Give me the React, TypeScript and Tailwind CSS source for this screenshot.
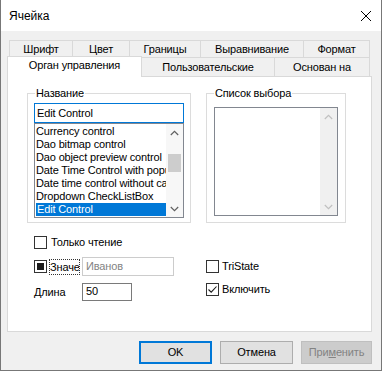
import React from "react";

const font = "font-['Liberation_Sans',Arial,sans-serif]";

function Box({ state }: { state: "off" | "on" | "mixed" }) {
  return (
    <span className="w-[13px] h-[13px] border border-[#333333] bg-white flex items-center justify-center shrink-0">
      {state === "mixed" && <span className="w-[7px] h-[7px] bg-[#1a1a1a]" />}
      {state === "on" && (
        <svg width="11" height="11" viewBox="0 0 11 11">
          <path d="M1.5 5.5 L4.2 8.2 L9.5 2.5" fill="none" stroke="#1a1a1a" strokeWidth="1.1" />
        </svg>
      )}
    </span>
  );
}

function Chevron({ up, color }: { up?: boolean; color: string }) {
  return (
    <svg width="9" height="6" viewBox="0 0 9 6">
      <path
        d={up ? "M0.8 5 L4.5 1.3 L8.2 5" : "M0.8 1 L4.5 4.7 L8.2 1"}
        fill="none"
        stroke={color}
        strokeWidth="1.2"
      />
    </svg>
  );
}

const items = [
  "Currency control",
  "Dao bitmap control",
  "Dao object preview control",
  "Date Time Control with popup calendar",
  "Date time control without calendar",
  "Dropdown CheckListBox",
  "Edit Control",
];

export default function App() {
  return (
    <div className={`w-[382px] h-[371px] flex flex-col border-x border-b border-[#777777] text-[11px] tracking-[-0.15px] text-black ${font}`}>
      {/* title bar */}
      <div className="h-[31px] bg-white flex items-center pl-[8px] pr-[10px] shrink-0">
        <span className="text-[12px] tracking-normal">Ячейка</span>
        <svg className="ml-auto" width="10" height="10" viewBox="0 0 10 10">
          <path d="M0 0 L10 10 M10 0 L0 10" stroke="#000" strokeWidth="1" />
        </svg>
      </div>

      <div className="flex-1 bg-[#f0f0f0] pl-[6px] pr-[9px] pt-[9px] flex flex-col">
        {/* back tab row */}
        <div className="flex h-[17px] ml-[2px]">
          <div className="w-[63px] border-l border-t border-[#d9d9d9] flex items-center justify-center">Шрифт</div>
          <div className="w-[57px] border-l border-t border-[#d9d9d9] flex items-center justify-center">Цвет</div>
          <div className="w-[71px] border-l border-t border-[#d9d9d9] flex items-center justify-center">Границы</div>
          <div className="w-[103px] border-l border-t border-[#d9d9d9] flex items-center justify-center">Выравнивание</div>
          <div className="w-[67px] border-x border-t border-[#d9d9d9] flex items-center justify-center">Формат</div>
        </div>
        {/* front tab row */}
        <div className="flex h-[19px] items-end">
          <div className="relative z-10 w-[135px] h-[21px] -mb-px bg-white border-x border-t border-[#d9d9d9] flex items-center justify-center pb-[3px]">
            Орган управления
          </div>
          <div className="w-[133px] h-[19px] border-r border-t border-[#d9d9d9] flex items-center justify-center">Пользовательские</div>
          <div className="w-[95px] h-[19px] border-r border-t border-[#d9d9d9] flex items-center justify-center">Основан на</div>
        </div>

        {/* tab panel */}
        <div className="w-full h-[256px] bg-white border border-[#d9d9d9] pl-[19px] pt-[16px] flex flex-col">
          <div className="flex gap-[15px]">
            {/* Название */}
            <div className="relative w-[164px] h-[130px] border border-[#dcdcdc] pl-[6px] pt-[9px]">
              <span className="absolute -top-[8px] left-[7px] px-[1px] bg-white leading-[14px]">Название</span>
              <div className="w-[150px] h-[20px] border border-[#0078d7] flex items-center pl-[2px]">Edit Control</div>
              <div className="w-[150px] h-[95px] border border-[#828790] flex">
                <div className="w-[131px] pt-[1px] flex flex-col">
                  {items.map((t, i) => (
                    <div
                      key={t}
                      className={`h-[13px] leading-[13px] pl-[1px] whitespace-nowrap overflow-hidden ${
                        i === items.length - 1 ? "bg-[#0078d7] text-white ml-px" : ""
                      }`}
                    >
                      {t}
                    </div>
                  ))}
                </div>
                <div className="w-[17px] flex flex-col bg-[#f7f7f7]">
                  <div className="h-[17px] flex items-center justify-center">
                    <Chevron up color="#606060" />
                  </div>
                  <div className="flex-1 flex flex-col items-center">
                    <div className="mt-[13px] w-[13px] h-[18px] bg-[#cdcdcd]" />
                  </div>
                  <div className="h-[17px] flex items-center justify-center">
                    <Chevron color="#606060" />
                  </div>
                </div>
              </div>
            </div>

            {/* Список выбора */}
            <div className="relative w-[140px] h-[130px] border border-[#dcdcdc] pl-[7px] pt-[13px]">
              <span className="absolute -top-[8px] left-[7px] px-[1px] bg-white leading-[14px]">Список выбора</span>
              <div className="w-[124px] h-[109px] border border-[#828790] flex justify-end">
                <div className="w-[17px] flex flex-col bg-[#f0f0f0]">
                  <div className="h-[17px] flex items-center justify-center">
                    <Chevron up color="#c0c0c0" />
                  </div>
                  <div className="flex-1" />
                  <div className="h-[17px] flex items-center justify-center">
                    <Chevron color="#c0c0c0" />
                  </div>
                </div>
              </div>
            </div>
          </div>

          {/* options */}
          <div className="mt-[13px] pl-[7px] flex">
            <div className="w-[172px] flex flex-col">
              <div className="h-[13px] flex items-center gap-[4px]">
                <Box state="off" />
                <span>Только чтение</span>
              </div>
              <div className="mt-[8px] h-[19px] flex items-center">
                <Box state="mixed" />
                <span className="ml-[2px] w-[31px] h-[16px] shrink-0 border border-dotted border-[#333] overflow-hidden whitespace-nowrap leading-[14px]">
                  Значение
                </span>
                <div className="ml-[2px] w-[92px] h-[19px] border border-[#cccccc] flex items-center pl-[3px] text-[#838383]">
                  Иванов
                </div>
              </div>
              <div className="mt-[6px] h-[19px] flex items-center">
                <span className="w-[48px] pt-[2px]">Длина</span>
                <div className="w-[50px] h-[18px] border border-[#7a7a7a] flex items-center pl-[3px]">50</div>
              </div>
            </div>
            <div className="flex flex-col pt-[21px]">
              <div className="h-[19px] flex items-center gap-[3px]">
                <Box state="off" />
                <span>TriState</span>
              </div>
              <div className="mt-[7px] h-[13px] flex items-center gap-[3px]">
                <Box state="on" />
                <span>Включить</span>
              </div>
            </div>
          </div>
        </div>

        {/* buttons */}
        <div className="mt-[9px] flex justify-end gap-[8px]">
          <div className="w-[73px] h-[23px] bg-[#e1e1e1] border-2 border-[#0078d7] flex items-center justify-center">OK</div>
          <div className="w-[73px] h-[23px] bg-[#e1e1e1] border border-[#adadad] flex items-center justify-center">Отмена</div>
          <div className="w-[71px] h-[23px] bg-[#cccccc] border border-[#bfbfbf] flex items-center justify-center text-[#838383]">
            <span>
              При<span className="underline">м</span>енить
            </span>
          </div>
        </div>
      </div>
    </div>
  );
}
